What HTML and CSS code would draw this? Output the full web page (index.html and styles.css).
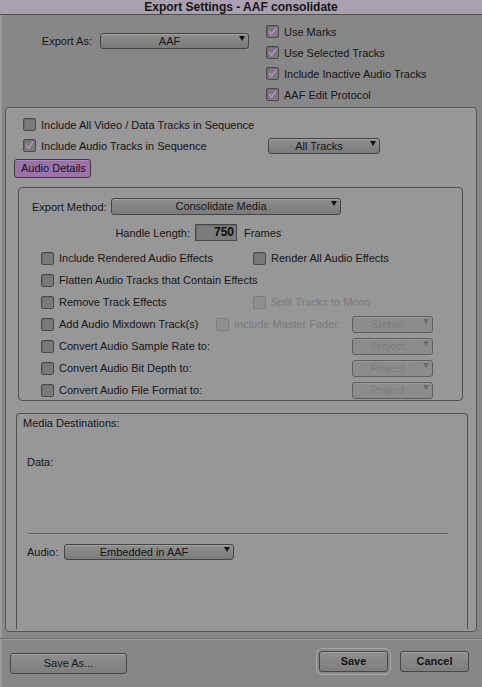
FILE: index.html
```html
<!DOCTYPE html>
<html>
<head>
<meta charset="utf-8">
<link rel="stylesheet" href="styles.css">
</head>
<body>
<div class="window">
  <div class="titlebar">Export Settings - AAF consolidate</div>

  <div class="top">
    <div class="export-as">
      <span class="ea-label">Export As:</span>
      <div class="dropdown dd-export">AAF<span class="arrow"></span></div>
    </div>
    <div class="top-checks">
      <div class="row21"><span class="box checked"><svg viewBox="0 0 13 13"><path d="M3 6.5 L5.3 10 L10.5 2.5"/></svg></span><span class="txt">Use Marks</span></div>
      <div class="row21"><span class="box checked"><svg viewBox="0 0 13 13"><path d="M3 6.5 L5.3 10 L10.5 2.5"/></svg></span><span class="txt">Use Selected Tracks</span></div>
      <div class="row21"><span class="box checked"><svg viewBox="0 0 13 13"><path d="M3 6.5 L5.3 10 L10.5 2.5"/></svg></span><span class="txt">Include Inactive Audio Tracks</span></div>
      <div class="row21"><span class="box checked"><svg viewBox="0 0 13 13"><path d="M3 6.5 L5.3 10 L10.5 2.5"/></svg></span><span class="txt">AAF Edit Protocol</span></div>
    </div>
  </div>

  <div class="panel">
    <div class="seq-rows">
      <div class="row21"><span class="box"></span><span class="txt">Include All Video / Data Tracks in Sequence</span></div>
      <div class="row21">
        <div class="seq-label"><span class="box checked"><svg viewBox="0 0 13 13"><path d="M3 6.5 L5.3 10 L10.5 2.5"/></svg></span><span class="txt">Include Audio Tracks in Sequence</span></div>
        <div class="dropdown dd-tracks">All Tracks<span class="arrow"></span></div>
      </div>
    </div>

    <div class="audio-details-btn">Audio Details</div>

    <div class="audio-box">
      <div class="method-row">
        <span class="method-label">Export Method:</span>
        <div class="dropdown dd-method">Consolidate Media<span class="arrow"></span></div>
      </div>
      <div class="handle-row">
        <span class="handle-label">Handle Length:</span>
        <div class="num-input">750</div>
        <span class="frames">Frames</span>
      </div>
      <div class="opt-rows">
        <div class="row22">
          <div class="cell w212"><span class="box"></span><span class="txt">Include Rendered Audio Effects</span></div>
          <div class="cell"><span class="box"></span><span class="txt">Render All Audio Effects</span></div>
        </div>
        <div class="row22">
          <div class="cell"><span class="box"></span><span class="txt">Flatten Audio Tracks that Contain Effects</span></div>
        </div>
        <div class="row22">
          <div class="cell w212"><span class="box"></span><span class="txt">Remove Track Effects</span></div>
          <div class="cell disabled"><span class="box"></span><span class="txt">Split Tracks to Mono</span></div>
        </div>
        <div class="row22">
          <div class="cell w175"><span class="box"></span><span class="txt">Add Audio Mixdown Track(s)</span></div>
          <div class="cell w136 disabled"><span class="box"></span><span class="txt">Include Master Fader</span></div>
          <div class="dropdown dd-small off">Stereo<span class="arrow"></span></div>
        </div>
        <div class="row22">
          <div class="cell w311"><span class="box"></span><span class="txt">Convert Audio Sample Rate to:</span></div>
          <div class="dropdown dd-small off">Project<span class="arrow"></span></div>
        </div>
        <div class="row22">
          <div class="cell w311"><span class="box"></span><span class="txt">Convert Audio Bit Depth to:</span></div>
          <div class="dropdown dd-small off">Project<span class="arrow"></span></div>
        </div>
        <div class="row22">
          <div class="cell w311"><span class="box"></span><span class="txt">Convert Audio File Format to:</span></div>
          <div class="dropdown dd-small off">Project<span class="arrow"></span></div>
        </div>
      </div>
    </div>

    <div class="media-box">
      <div class="media-title">Media Destinations:</div>
      <div class="data-label">Data:</div>
      <div class="media-sep"></div>
      <div class="audio-row">
        <span class="audio-label">Audio:</span>
        <div class="dropdown dd-embed">Embedded in AAF<span class="arrow"></span></div>
      </div>
    </div>
  </div>

  <div class="footer-sep"></div>
  <div class="footer">
    <div class="btn btn-saveas">Save As...</div>
    <div class="spacer"></div>
    <div class="btn btn-bold btn-save">Save</div>
    <div class="btn btn-bold btn-cancel">Cancel</div>
  </div>
</div>
</body>
</html>
```

FILE: styles.css
```css
* { box-sizing: border-box; }
html, body { margin: 0; padding: 0; }
body {
  font-family: "Liberation Sans", Arial, sans-serif;
  font-size: 11px;
  color: #151515;
  background: #888;
}
.window {
  width: 482px;
  height: 687px;
  background: #878787;
  display: flex;
  flex-direction: column;
  box-shadow: inset 2px 0 0 #9a9a9a;
  overflow: hidden;
}
.titlebar {
  height: 15px;
  background: #aaa1b0;
  border-bottom: 1px solid #4e4e4e;
  text-align: center;
  font-weight: bold;
  font-size: 12px;
  line-height: 14px;
  color: #151515;
  flex: none;
}

/* top section */
.top {
  height: 92px;
  display: flex;
  padding-top: 6px;
  flex: none;
}
.export-as {
  width: 266px;
  display: flex;
  align-items: center;
  margin-top: 12px;
  height: 16px;
}
.ea-label {
  width: 92px;
  text-align: right;
  margin-right: 8px;
}
.row21 {
  height: 21px;
  display: flex;
  align-items: center;
}
.txt { white-space: nowrap; }
.box {
  width: 13px;
  height: 13px;
  border: 1px solid #4a4a4a;
  border-radius: 2px;
  background: #7a7a7a;
  box-shadow: inset 1px 1px 0 #6c6c6c;
  margin-right: 5px;
  flex: none;
  display: inline-flex;
}
.box svg { width: 11px; height: 11px; }
.box svg path {
  fill: none;
  stroke: #c38cdb;
  stroke-width: 1.7;
  stroke-linecap: round;
  stroke-linejoin: round;
}
.disabled { color: #7b7b7b; }
.disabled .box {
  background: #8f8f8f;
  border-color: #7a7a7a;
  box-shadow: none;
}

/* dropdowns */
.dropdown {
  position: relative;
  height: 16px;
  border: 1px solid #444;
  border-radius: 3px;
  background: linear-gradient(#8e8e8e, #7b7b7b);
  box-shadow: inset 0 1px 0 #a2a2a2;
  text-align: center;
  line-height: 14px;
  padding-right: 10px;
  white-space: nowrap;
  flex: none;
}
.arrow {
  position: absolute;
  right: 3px;
  top: 2px;
  width: 0;
  height: 0;
  border-left: 3.5px solid transparent;
  border-right: 3.5px solid transparent;
  border-top: 5px solid #121212;
}
.dropdown.off {
  color: #7d7d7d;
  border-color: #5e5e5e;
  background: #8c8c8c;
  box-shadow: inset 0 1px 0 #999;
}
.dropdown.off .arrow { border-top-color: #6a6a6a; }
.dd-export { width: 149px; }
.dd-tracks { width: 112px; }
.dd-method { width: 230px; height: 17px; line-height: 15px; }
.dd-small { width: 81px; height: 17px; line-height: 15px; }
.dd-embed { width: 170px; height: 16px; }

/* panel */
.panel {
  flex: none;
  height: 525px;
  margin: 0 5px 0 5px;
  border: 1px solid #555;
  border-radius: 4px;
  background: #979797;
  box-shadow: inset 0 1px 0 #a4a4a4;
  display: flex;
  flex-direction: column;
}
.seq-rows {
  padding: 6px 0 0 17px;
}
.seq-label {
  width: 245px;
  display: flex;
  align-items: center;
}
.audio-details-btn {
  margin: 3px 0 0 8px;
  width: 77px;
  height: 19px;
  background: #9c72ac;
  border: 1px solid #3a3a3a;
  border-radius: 3px;
  box-shadow: inset 0 1px 0 #b08bbd;
  padding-left: 6px;
  line-height: 17px;
  white-space: nowrap;
  color: #121212;
}
.audio-box {
  margin: 9px 13px 0 12px;
  height: 214px;
  border: 1px solid #505050;
  border-radius: 4px;
  padding-top: 10px;
}
.method-row {
  display: flex;
  align-items: center;
  height: 17px;
  padding-left: 13px;
}
.method-label { width: 79px; }
.handle-row {
  display: flex;
  align-items: center;
  height: 17px;
  margin-top: 9px;
}
.handle-label {
  width: 171px;
  text-align: right;
  margin-right: 5px;
}
.num-input {
  width: 42px;
  height: 17px;
  border: 1px solid #474747;
  background: #7c7c7c;
  box-shadow: inset 1px 1px 0 #6a6a6a;
  text-align: right;
  padding-right: 2px;
  line-height: 15px;
  font-size: 12px;
  font-weight: bold;
  color: #0d0d0d;
  margin-right: 7px;
}
.frames { color: #151515; }
.opt-rows {
  margin-top: 6px;
  padding-left: 22px;
}
.row22 {
  height: 22px;
  display: flex;
  align-items: center;
}
.cell {
  display: flex;
  align-items: center;
  flex: none;
}
.w212 { width: 212px; }
.w175 { width: 175px; }
.w136 { width: 136px; }
.w311 { width: 311px; }

.media-box {
  margin: 12px 8px 0 10px;
  flex: 1;
  border: 1px solid #505050;
  border-bottom: none;
  border-radius: 4px 4px 0 0;
  margin-bottom: 2px;
}
.media-title {
  padding: 2px 0 0 6px;
  line-height: 14px;
}
.data-label {
  margin-top: 25px;
  padding-left: 10px;
  line-height: 14px;
}
.media-sep {
  margin: 64px 0 0 11px;
  width: 420px;
  height: 1px;
  background: #5e5e5e;
  box-shadow: 0 1px 0 #a3a3a3;
}
.audio-row {
  margin-top: 10px;
  display: flex;
  align-items: center;
  padding-left: 10px;
}
.audio-label { width: 37px; }

/* footer */
.footer-sep {
  margin-top: 6px;
  height: 1px;
  background: #6a6a6a;
  box-shadow: 0 1px 0 #9c9c9c;
  flex: none;
}
.footer {
  flex: 1;
  display: flex;
  align-items: flex-start;
  padding: 12px 13px 0 10px;
}
.spacer { flex: 1; }
.btn {
  height: 21px;
  border: 1px solid #474747;
  border-radius: 3px;
  background: linear-gradient(#8f8f8f, #7e7e7e);
  box-shadow: inset 0 1px 0 #a3a3a3;
  text-align: center;
  line-height: 19px;
  white-space: nowrap;
}
.btn-saveas { width: 117px; margin-top: 2px; color: #1a1a1a; }
.btn-bold { font-weight: bold; font-size: 11px; }
.btn-save {
  width: 69px;
  outline: 1px solid #a9a9a9;
  outline-offset: 2px;
}
.btn-cancel { width: 69px; margin-left: 12px; }
```
